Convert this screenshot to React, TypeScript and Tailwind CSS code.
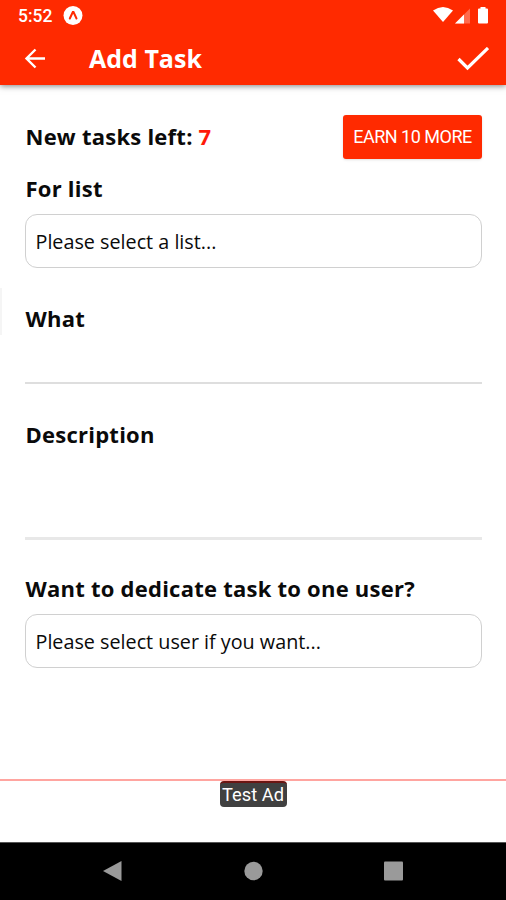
import { type ReactNode } from 'react';

function StatusBar() {
  return (
    <div className="flex h-8 items-center justify-between pl-[18px] pr-[15px] font-['Roboto',sans-serif]">
      <div className="flex items-center gap-[11px]">
        <span className="text-[17.5px] font-medium leading-8">5:52</span>
        <svg width="20" height="20" viewBox="0 0 20 20">
          <circle cx="10" cy="9.5" r="9.5" fill="#fff" />
          <path
            d="M6.8 12.5 9.8 6h.7l3 6.5"
            fill="none"
            stroke="#ff2a00"
            strokeWidth="2"
            strokeLinecap="round"
          />
        </svg>
      </div>
      <svg width="58" height="20" viewBox="0 0 58 20" fill="#fff">
        <path d="M0 4.5Q10-2.5 20 4.5L10 16z" />
        <path d="M37 2.5v15H22z" opacity=".3" />
        <path d="M31 8.5v9h-9z" />
        <path d="M45 3.5q0-1 1-1h1.5V1h5v1.5H54q1 0 1 1v13q0 1-1 1h-8q-1 0-1-1z" />
      </svg>
    </div>
  );
}

function Label({ children }: { children: ReactNode }) {
  return (
    <label className="block pl-[0.5px] text-[22px] font-bold leading-[28px] tracking-[0.24px]">
      {children}
    </label>
  );
}

function SelectBox({ placeholder }: { placeholder: string }) {
  return (
    <button className="block h-[54px] w-full rounded-[12px] border-[1.5px] border-[#d0d0d0] px-[9.5px] pt-px text-left text-[19.75px]">
      {placeholder}
    </button>
  );
}

export default function App() {
  return (
    <div className="relative flex h-[900px] w-[506px] flex-col overflow-hidden bg-white font-['Open_Sans',sans-serif] text-[#0a0a0a]">
      <header className="h-[85px] shrink-0 bg-[#ff2a00] text-white shadow-[0_1px_6px_rgba(0,0,0,0.5)]">
        <StatusBar />
        <div className="flex h-[53px] items-center pl-[24px] pr-[17px]">
          <svg width="22" height="22" viewBox="0 0 22 22" fill="none" stroke="#fff" strokeWidth="2.4">
            <path d="M21 10.5H2.5M11.5 1.5l-9 9 9 9" />
          </svg>
          <h1 className="ml-[43px] flex-1 text-[25px] font-bold">Add Task</h1>
          <svg width="32" height="24" viewBox="0 0 32 24" fill="none" stroke="#fff" strokeWidth="3.2">
            <path d="m1.5 12 9 9L31 1" />
          </svg>
        </div>
      </header>
      {/* drawer edge */}
      <div className="absolute left-0 top-[288px] h-[47px] w-[2px] bg-[#f5f5f5]" />
      <main className="flex-1 pl-[25px] pr-6 pt-[29px]">
        <div className="flex h-[45px] items-center justify-between">
          <p className="pl-[0.5px] text-[22px] font-bold tracking-[0.24px]">
            New tasks left: <span className="text-[#ff1a0a]">7</span>
          </p>
          <button className="h-[44px] w-[139px] rounded-[3px] bg-[#ff2a00] font-['Roboto',sans-serif] text-[18px] tracking-[-0.5px] text-white shadow">
            EARN 10 MORE
          </button>
        </div>
        <div className="mt-[15px]">
          <Label>For list</Label>
        </div>
        <div className="mt-[12px]">
          <SelectBox placeholder="Please select a list..." />
        </div>
        <div className="mt-[36px] h-[80px] border-b-2 border-[#dedede]">
          <Label>What</Label>
        </div>
        <div className="mt-[36px] h-[120px] border-b-3 border-[#e8e8e8]">
          <Label>Description</Label>
        </div>
        <div className="mt-[34px]">
          <Label>Want to dedicate task to one user?</Label>
        </div>
        <div className="mt-[12px]">
          <SelectBox placeholder="Please select user if you want..." />
        </div>
      </main>
      <div className="flex h-[63px] shrink-0 items-start justify-center border-t-2 border-[#ffa5a0] font-['Roboto',sans-serif]">
        <span className="h-[26px] w-[67px] rounded-[4px] border-t-2 border-[#6b1512] bg-[#404040] text-center text-[18.3px] leading-[24px] text-white">
          Test Ad
        </span>
      </div>
      <nav className="flex h-[58px] shrink-0 items-center border-t border-[#555] bg-black pl-[103px]">
        <svg width="302" height="22" viewBox="0 0 302 22" fill="#9a9a9a">
          <path d="M0 10 18.5 0v20z" />
          <circle cx="150.5" cy="10" r="9.2" />
          <rect x="281" y=".5" width="19" height="19" rx="1" />
        </svg>
      </nav>
    </div>
  );
}
